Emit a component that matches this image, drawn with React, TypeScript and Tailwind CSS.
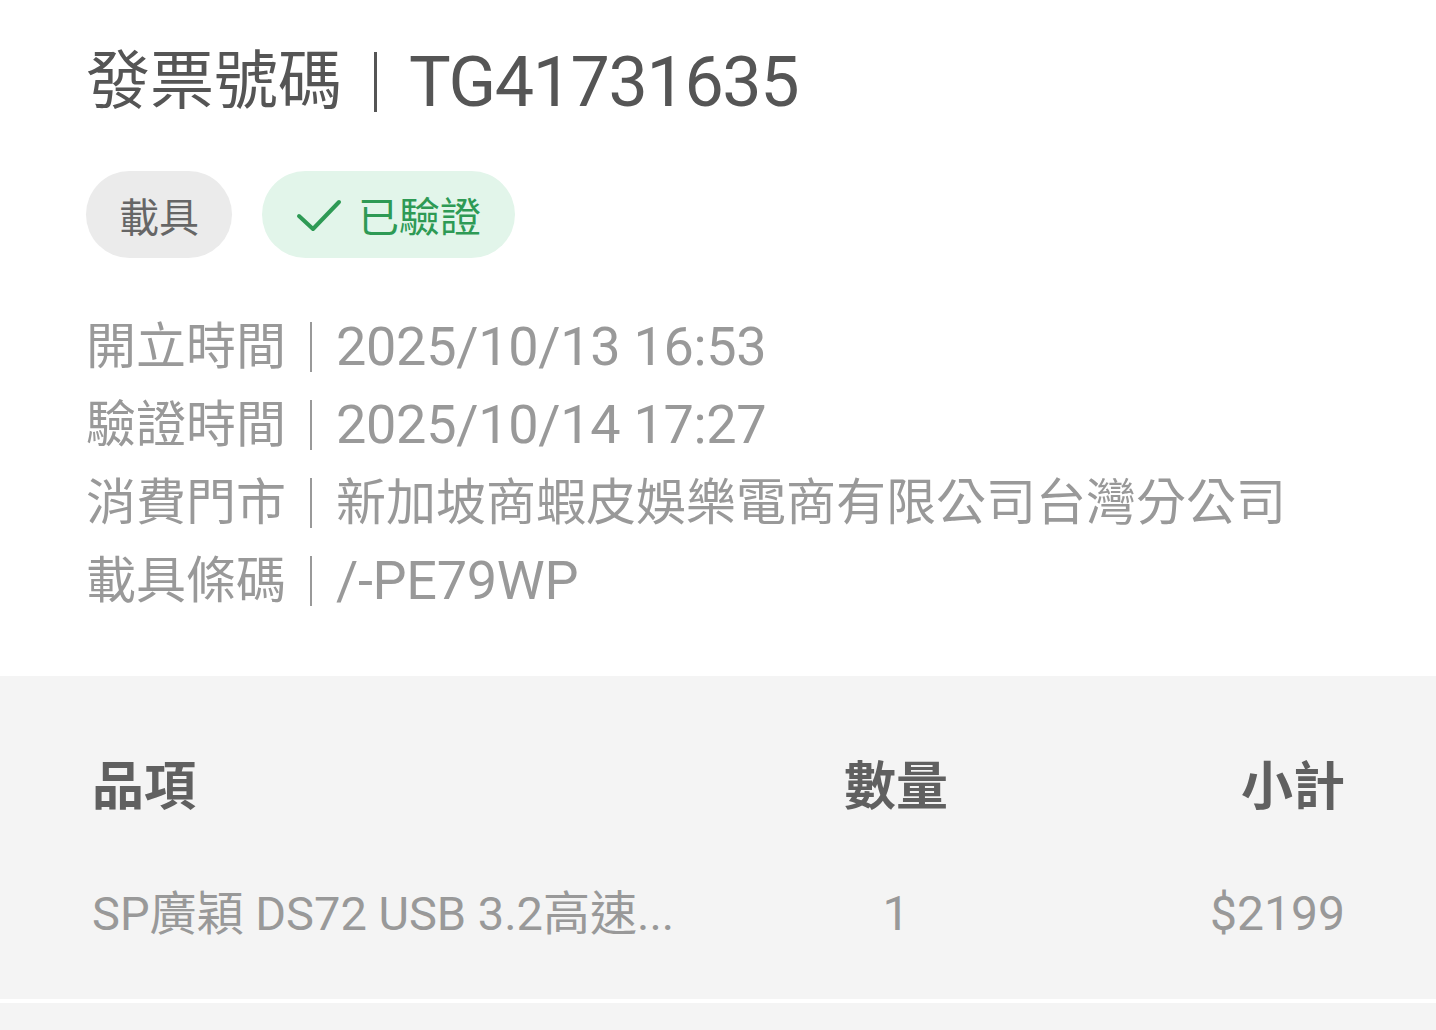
const font = { fontFamily: 'Roboto, "Noto Sans CJK TC", sans-serif' };

const rows = [
  { label: "開立時間", value: "2025/10/13 16:53", latin: true },
  { label: "驗證時間", value: "2025/10/14 17:27", latin: true },
  { label: "消費門市", value: "新加坡商蝦皮娛樂電商有限公司台灣分公司", latin: false },
  { label: "載具條碼", value: "/-PE79WP", latin: true },
];

function Check() {
  return (
    <svg width="46" height="36" viewBox="0 0 46 36" fill="none">
      <path d="M3 19 L17 32 L43 5" stroke="#2e9a55" strokeWidth="4" strokeLinecap="round" strokeLinejoin="round" />
    </svg>
  );
}

export default function App() {
  return (
    <div className="w-[1436px] h-[1030px] bg-white overflow-hidden flex flex-col" style={font}>
      <div className="pl-[86px] pt-[44px]">
        <div className="flex items-center h-[76px] text-[#555555]">
          <span className="text-[64px] leading-none">發票號碼</span>
          <span className="ml-[32px] mr-[32px] w-[3px] h-[60px] bg-[#555555]" />
          <span className="text-[70px] leading-none tracking-[-1.4px]">TG41731635</span>
        </div>

        <div className="flex items-center gap-[30px] mt-[51px]">
          <div className="h-[87px] w-[146px] rounded-full bg-[#ebebeb] flex items-center justify-center pt-[8px] text-[40px] text-[#666666]">
            載具
          </div>
          <div className="h-[87px] w-[253px] rounded-full bg-[#e2f5ea] flex items-center justify-center gap-[16px] text-[41px] text-[#2e9a55]">
            <Check />
            <span className="pt-[8px]">已驗證</span>
          </div>
        </div>

        <div className="mt-[50px] flex flex-col">
          {rows.map((r) => (
            <div key={r.label} className="flex items-center h-[78px] text-[#999999]">
              <span className="text-[50px] leading-none">{r.label}</span>
              <span className="ml-[24px] mr-[24px] w-[2px] h-[50px] bg-[#999999]" />
              {r.latin ? (
                <span className="text-[54px] leading-none tracking-[-0.3px]">{r.value}</span>
              ) : (
                <span className="text-[50px] leading-none">{r.value}</span>
              )}
            </div>
          ))}
        </div>
      </div>

      <div className="mt-[56px] flex-1 bg-[#f4f4f4] flex flex-col">
        <div className="pl-[92px] pr-[91px] pt-[49px] pb-[22px]">
          <div className="grid grid-cols-[752px_104px_1fr] items-center h-[126px] text-[#606060] font-bold text-[52px]">
            <span>品項</span>
            <span className="text-center">數量</span>
            <span className="text-right">小計</span>
          </div>
          <div className="grid grid-cols-[752px_104px_1fr] items-center h-[126px] text-[#999999]">
            <span className="text-[47px] whitespace-nowrap">SP廣穎 DS72 USB 3.2高速...</span>
            <span className="text-[48px] text-center">1</span>
            <span className="text-[48px] text-right">$2199</span>
          </div>
        </div>
        <div className="h-[4px] bg-white" />
      </div>
    </div>
  );
}
